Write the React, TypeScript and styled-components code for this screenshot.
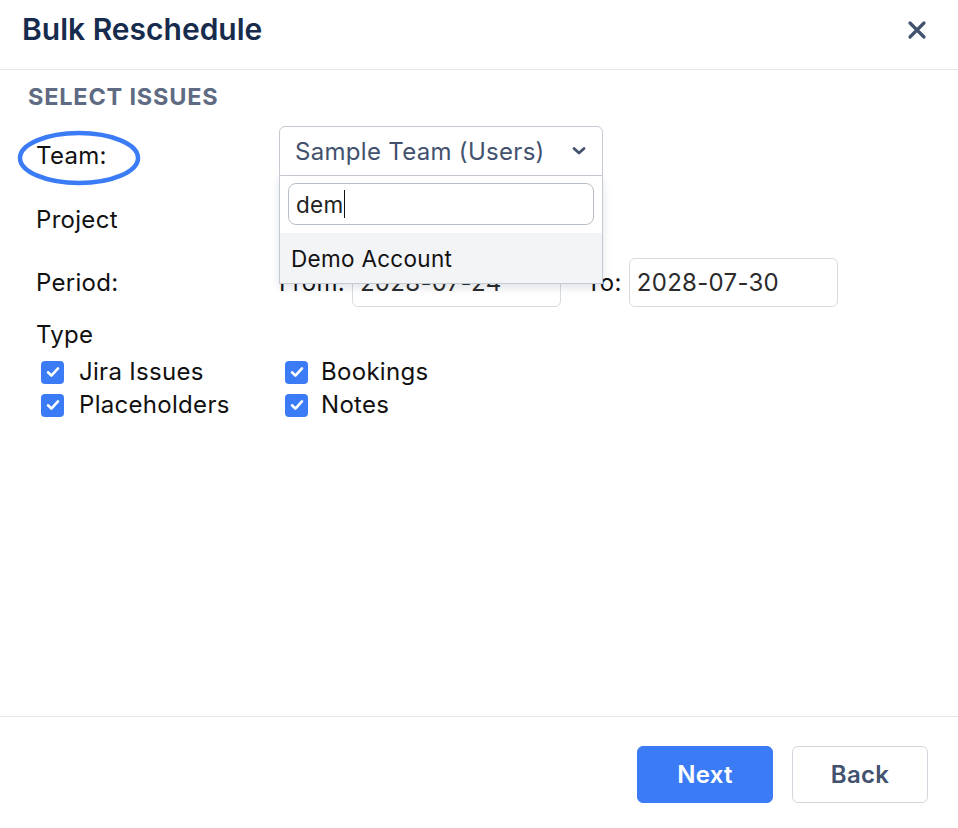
import React from "react";
import styled, { createGlobalStyle } from "styled-components";

const Global = createGlobalStyle`
  html, body { margin: 0; padding: 0; background: #ffffff; }
  body { font-family: Inter, "Noto Sans", sans-serif; color: #111111; letter-spacing: 0.3px; }
  * { box-sizing: border-box; }
`;

const Dialog = styled.div`
  width: 958px;
  height: 828px;
  display: flex;
  flex-direction: column;
  background: #fff;
`;

const Header = styled.header`
  height: 70px;
  border-bottom: 1px solid #e4e6ea;
  display: flex;
  align-items: center;
  justify-content: space-between;
  padding: 0 30px 0 22px;
`;

const Title = styled.h1`
  margin: 0;
  font-size: 30px;
  font-weight: 600;
  color: #172b4d;
  letter-spacing: 0px;
  padding-bottom: 12px;
`;

const CloseButton = styled.button`
  border: 0;
  background: transparent;
  padding: 0;
  width: 22px;
  height: 22px;
  display: flex;
  align-items: center;
  justify-content: center;
  margin-bottom: 10px;
  cursor: pointer;
`;

const Body = styled.main`
  flex: 1;
  padding: 12px 0 0 0;
`;

const SectionTitle = styled.h2`
  margin: 0 0 0 28px;
  font-size: 23.5px;
  font-weight: 700;
  color: #5e6b83;
  line-height: 30px;
  letter-spacing: 0.8px;
`;

const Form = styled.div`
  padding: 14px 0 0 36px;
  display: flex;
  flex-direction: column;
`;

const Row = styled.div<{ $gap?: number }>`
  display: flex;
  align-items: flex-start;
  margin-bottom: ${(p) => p.$gap ?? 14}px;
`;

const Label = styled.div<{ $pad?: number }>`
  position: relative;
  width: 243px;
  flex: none;
  font-size: 24px;
  line-height: 30px;
  padding-top: ${(p) => p.$pad ?? 15}px;
  color: #111;
`;

const Ring = styled.svg`
  position: absolute;
  left: -20px;
  top: 4px;
  pointer-events: none;
`;

const SelectWrap = styled.div`
  position: relative;
  width: 324px;
`;

const SelectBox = styled.div<{ $open?: boolean }>`
  height: 50px;
  border: 1px solid #c6cbd3;
  border-radius: ${(p) => (p.$open ? "6px 6px 0 0" : "6px")};
  display: flex;
  align-items: center;
  justify-content: space-between;
  padding: 0 16px 0 15px;
  font-size: 24px;
  color: #42526e;
  background: #fff;
`;

const Menu = styled.div`
  position: absolute;
  left: 0;
  top: 50px;
  width: 324px;
  background: #fff;
  border: 1px solid #c6cbd3;
  border-top: 0;
  box-shadow: 0 4px 8px rgba(9, 30, 66, 0.12);
  z-index: 5;
  padding-top: 7px;
`;

const Search = styled.div`
  margin: 0 8px;
  height: 42px;
  border: 1px solid #b9bfc9;
  border-radius: 8px;
  display: flex;
  align-items: center;
  padding: 0 7px;
  font-size: 22.5px;
  color: #222;
`;

const Caret = styled.span`
  display: inline-block;
  width: 1.5px;
  height: 28px;
  background: #111;
`;

const Option = styled.div<{ $active?: boolean }>`
  margin-top: 8px;
  height: 50px;
  display: flex;
  align-items: center;
  padding: 0 11px;
  font-size: 22.5px;
  color: #111;
  background: ${(p) => (p.$active ? "#f3f4f6" : "#fff")};
`;

const PeriodGroup = styled.div`
  display: flex;
  align-items: center;
`;

const InlineLabel = styled.span<{ $ml?: number }>`
  font-size: 24px;
  margin-left: ${(p) => p.$ml ?? 0}px;
  margin-right: 7px;
  color: #111;
`;

const DateInput = styled.div`
  width: 209px;
  height: 49px;
  border: 1px solid #d7dbe0;
  border-radius: 6px;
  display: flex;
  align-items: center;
  padding: 0 7px;
  font-size: 24px;
  color: #2b2b2b;
`;

const TypeLabel = styled.div`
  font-size: 24px;
  line-height: 30px;
  color: #111;
  margin-bottom: 10px;
`;

const CheckGrid = styled.div`
  display: grid;
  grid-template-columns: 244px auto;
  row-gap: 9px;
  margin-left: 5px;
`;

const CheckItem = styled.label<{ $gap?: number }>`
  display: flex;
  align-items: center;
  gap: ${(p) => p.$gap ?? 15}px;
  font-size: 24px;
  line-height: 24px;
  color: #111;
`;

const Box = styled.span`
  width: 23px;
  height: 23px;
  border-radius: 4px;
  background: #3b7cf6;
  display: flex;
  align-items: center;
  justify-content: center;
  flex: none;
`;

const Footer = styled.footer`
  height: 112px;
  border-top: 1px solid #e4e6ea;
  display: flex;
  justify-content: flex-end;
  align-items: flex-start;
  gap: 19px;
  padding: 29px 30px 0 0;
`;

const Button = styled.button<{ $primary?: boolean }>`
  width: 136px;
  height: 57px;
  border-radius: 6px;
  font-family: Inter, sans-serif;
  font-size: 24px;
  font-weight: 600;
  letter-spacing: 0.3px;
  cursor: pointer;
  border: 1px solid ${(p) => (p.$primary ? "#3b7cf6" : "#d2d6dc")};
  background: ${(p) => (p.$primary ? "#3b7cf6" : "#fff")};
  color: ${(p) => (p.$primary ? "#fff" : "#42526e")};
`;

const Check = () => (
  <Box>
    <svg width="14" height="12" viewBox="0 0 14 12">
      <path d="M2 6.3 L5.4 9.6 L12 2.4" fill="none" stroke="#fff" strokeWidth="2.6" strokeLinecap="round" strokeLinejoin="round" />
    </svg>
  </Box>
);

export default function App() {
  return (
    <>
      <Global />
      <Dialog>
        <Header>
          <Title>Bulk Reschedule</Title>
          <CloseButton aria-label="Close">
            <svg width="20" height="20" viewBox="0 0 20 20">
              <path d="M3 3 L17 17 M17 3 L3 17" stroke="#42526e" strokeWidth="3.2" strokeLinecap="round" />
            </svg>
          </CloseButton>
        </Header>
        <Body>
          <SectionTitle>SELECT ISSUES</SectionTitle>
          <Form>
            <Row>
              <Label>
                Team:
                <Ring width="126" height="58" viewBox="0 0 126 58">
                  <ellipse cx="63" cy="28" rx="59" ry="25" fill="none" stroke="#3b7cf6" strokeWidth="4.5" />
                </Ring>
              </Label>
              <SelectWrap>
                <SelectBox $open>
                  <span>Sample Team (Users)</span>
                  <svg width="14" height="10" viewBox="0 0 14 10">
                    <path d="M2 2.5 L7 7 L12 2.5" fill="none" stroke="#42526e" strokeWidth="2.8" strokeLinecap="round" strokeLinejoin="round" />
                  </svg>
                </SelectBox>
                <Menu>
                  <Search>
                    dem<Caret />
                  </Search>
                  <Option $active>Demo Account</Option>
                </Menu>
              </SelectWrap>
            </Row>
            <Row $gap={18}>
              <Label>Project</Label>
              <SelectWrap>
                <SelectBox />
              </SelectWrap>
            </Row>
            <Row $gap={13}>
              <Label $pad={10}>Period:</Label>
              <PeriodGroup>
                <InlineLabel>From:</InlineLabel>
                <DateInput>2028-07-24</DateInput>
                <InlineLabel $ml={25}>To:</InlineLabel>
                <DateInput>2028-07-30</DateInput>
              </PeriodGroup>
            </Row>
            <TypeLabel>Type</TypeLabel>
            <CheckGrid>
              <CheckItem><Check />Jira Issues</CheckItem>
              <CheckItem $gap={13}><Check />Bookings</CheckItem>
              <CheckItem><Check />Placeholders</CheckItem>
              <CheckItem $gap={13}><Check />Notes</CheckItem>
            </CheckGrid>
          </Form>
        </Body>
        <Footer>
          <Button $primary>Next</Button>
          <Button>Back</Button>
        </Footer>
      </Dialog>
    </>
  );
}
